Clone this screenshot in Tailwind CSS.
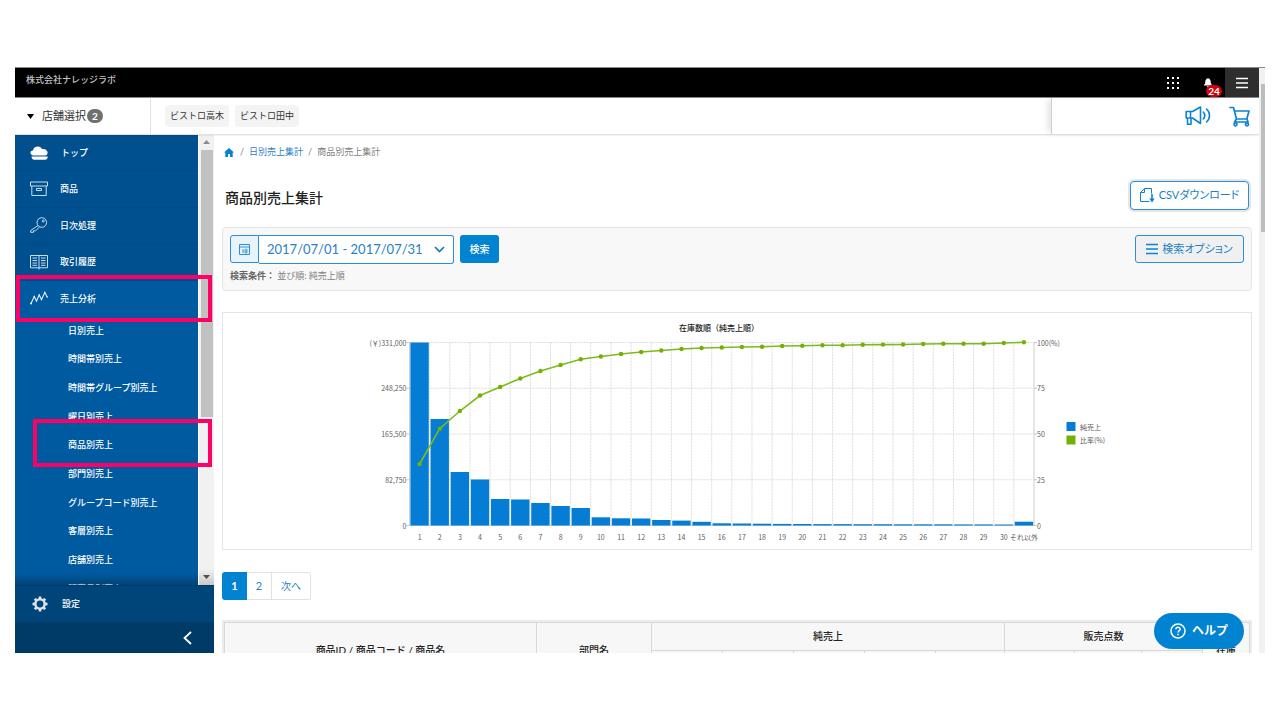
<!DOCTYPE html>
<html lang="ja">
<head>
<meta charset="utf-8">
<title>商品別売上集計</title>
<script src="https://cdn.jsdelivr.net/npm/@tailwindcss/browser@4"></script>
</head>
<body class="bg-white font-['Lato','Noto_Sans_CJK_JP',sans-serif] text-[9px] text-[#333]">
<div class="h-screen px-[15px] py-[67px]">
<div class="relative flex h-full overflow-hidden">

  <div class="flex min-w-0 flex-1 flex-col">
    <header class="flex h-[31px] shrink-0 items-center border-y border-[#8a8a8a] bg-black text-white">
      <div class="flex-1 pb-[6px] pl-[11px] font-medium text-[#c4c4c4]">株式会社ナレッジラボ</div>
      <button class="mr-[18px] size-6" aria-label="アプリ一覧">
        <svg viewBox="0 0 24 24" fill="#fff"><path d="M6 6h2v2H6zM11 6h2v2h-2zM16 6h2v2h-2zM6 11h2v2H6zM11 11h2v2h-2zM16 11h2v2h-2zM6 16h2v2H6zM11 16h2v2h-2zM16 16h2v2h-2z"/></svg>
      </button>
      <button class="relative mr-1 h-[29px] w-[18px]" aria-label="お知らせ">
        <svg class="absolute top-[10px] left-0 size-[10px]" viewBox="0 0 10 10" fill="#fff"><path d="M5 0.300C2.800.500 2.300 2.300 2.200 5L.800 7.500h8.400L7.800 5C7.700 2.300 7.200.500 5 .300zM3.800 8h2.400L5 9.600z"/></svg>
        <span class="absolute top-[17px] left-[3px] flex h-3 w-4 items-center justify-center rounded-md bg-[#d0000b] text-[10px] font-bold">24</span>
      </button>
      <button class="flex h-[29px] w-[34px] items-center justify-center bg-[#2e2e2e]" aria-label="メニュー">
        <svg class="h-3 w-3" viewBox="0 0 12 12" stroke="#fff" stroke-width="1.400"><path d="M0 1.500h12M0 6h12M0 10.500h12"/></svg>
      </button>
    </header>

    <div class="relative z-10 flex h-[37px] shrink-0 items-stretch border-b border-[#e2e2e2] bg-white shadow-[0_1px_1px_#0000000d]">
      <button class="flex w-[136px] items-center border-r border-[#e2e2e2] pl-3 text-[11px]">
        <svg class="mr-2 h-[5px] w-[7px]" viewBox="0 0 7 5"><path d="M0 0h7L3.500 5z"/></svg>
        店舗選択
        <span class="ml-px flex h-[14px] w-4 items-center justify-center rounded-full bg-[#707070] text-[10px] font-bold text-white">2</span>
      </button>
      <div class="flex flex-1 items-center gap-[6px] overflow-hidden pl-[14px]">
        <span class="flex h-[22px] items-center rounded bg-[#f4f4f4] px-[5px]">ビストロ高木</span>
        <span class="flex h-[22px] items-center rounded bg-[#f4f4f4] px-[5px]">ビストロ田中</span>
      </div>
      <div class="flex w-[208px] items-center justify-end gap-[18px] border-l border-[#d0d0d0] pr-[9px] shadow-[-5px_0_6px_-2px_#0000001f]">
        <button aria-label="お知らせ配信">
          <svg class="h-[22px] w-[26px]" viewBox="0 0 26 22" fill="none" stroke="#0a84d0" stroke-width="1.600" stroke-linejoin="round" stroke-linecap="round"><path d="M1.200 6.500h6.300L15.500 2v16.500l-8-5.500H1.200zM5.500 6.500V13M2.500 13v6.200h3.500V13.500M18.300 7c1.700 2 1.700 5 0 7M21.500 4c4 3.500 4 9.500 0 13"/></svg>
        </button>
        <button aria-label="カート">
          <svg class="h-[21px] w-[21px]" viewBox="0 0 21 21" fill="none" stroke="#0a84d0" stroke-width="1.700" stroke-linejoin="round" stroke-linecap="round"><path d="M1 1.500h3.500L7.500 13h10.300l2.200-8H5.500M7.500 13l-2 3h13.500l-1-3"/><circle cx="6.500" cy="18.300" r="1.500"/><circle cx="18" cy="18.300" r="1.500"/></svg>
        </button>
      </div>
    </div>

    <div class="flex min-h-0 flex-1">
      <aside class="flex w-[199px] shrink-0 flex-col text-white">
        <div class="flex min-h-0 flex-1">
          <nav class="relative min-w-0 flex-1 overflow-hidden bg-[#005aa0] font-medium">
            <ul class="grid h-[182px] grid-rows-5">
              <li class="border-b border-[#004a85] bg-[#00508f]"><a href="#" class="flex h-full items-center gap-3 pl-[15px]">
                <svg class="h-5 w-[19px]" viewBox="0 0 19 20" fill="#fff"><path d="M3.500 12.500C-.500 12-.500 7.500 3 7.500 3.500 3 10 2 12 6c4-.500 6 2 5.500 4.500-.300 1.200-1.200 2-2.500 2z"/><path d="M1.500 13.500h16.300c0 1.800-1 3.200-2.800 3.200H4.300c-1.800 0-2.800-1.400-2.800-3.200z"/></svg>
                トップ</a></li>
              <li class="border-b border-[#004a85] bg-[#00508f]"><a href="#" class="flex h-full items-center gap-3 pl-[15px]">
                <svg class="h-5 w-[18px]" viewBox="0 0 18 20" fill="none" stroke="#c9dcec"><path d="M.500 3h17v4H.500zM1.800 7v9.500h14.400V7M6.500 9.500h5v2h-5z"/></svg>
                商品</a></li>
              <li class="border-b border-[#004a85] bg-[#00508f]"><a href="#" class="flex h-full items-center gap-3 pl-[15px]">
                <svg class="h-5 w-[18px]" viewBox="0 0 18 20" fill="none" stroke="#c9dcec"><circle cx="11.800" cy="7.500" r="4.800"/><circle cx="13.300" cy="6" r="1"/><path d="M8 10.500l-7.300 5v1.800h2.800v-1.500h2L9.500 12"/></svg>
                日次処理</a></li>
              <li class="border-b border-[#004a85] bg-[#00508f]"><a href="#" class="flex h-full items-center gap-3 pl-[15px]">
                <svg class="h-5 w-[18px]" viewBox="0 0 18 20" fill="none" stroke="#c9dcec"><path d="M.500 3.500h17v12.300H.500zM9 3.500v14M2.500 6h4.500M2.500 8.500h4.500M2.500 11h4.500M2.500 13.300h4.500M11 6h4.500M11 8.500h4.500M11 11h4.500M11 13.300h4.500"/></svg>
                取引履歴</a></li>
              <li><a href="#" class="flex h-full items-center gap-3 pl-[15px]">
                <svg class="h-5 w-[18px]" viewBox="0 0 18 20" fill="none" stroke="#e4eef6" stroke-width="1.100"><path d="M1 14.500L4.300 7.500 6.500 12l2.700-6 2.300 4.500L14.800 3.500 17.200 8"/><g fill="#e4eef6" stroke="none"><circle cx="1" cy="14.500" r="1"/><circle cx="4.300" cy="7.500" r=".8"/><circle cx="6.500" cy="12" r=".8"/><circle cx="9.200" cy="6" r=".8"/><circle cx="11.500" cy="10.500" r=".8"/><circle cx="14.800" cy="3.500" r=".8"/><circle cx="17.200" cy="8" r=".8"/></g></svg>
                売上分析</a></li>
            </ul>
            <ul class="-mt-px grid h-[287px] grid-rows-10 items-center pl-[53px]">
              <li><a href="#">日別売上</a></li>
              <li><a href="#">時間帯別売上</a></li>
              <li><a href="#">時間帯グループ別売上</a></li>
              <li><a href="#">曜日別売上</a></li>
              <li><a href="#">商品別売上</a></li>
              <li><a href="#">部門別売上</a></li>
              <li><a href="#">グループコード別売上</a></li>
              <li><a href="#">客層別売上</a></li>
              <li><a href="#">店舗別売上</a></li>
              <li><a href="#">販売員別売上</a></li>
            </ul>
            <div class="absolute inset-x-0 bottom-0 h-3 bg-linear-to-b from-transparent to-black/25"></div>
          </nav>
          <div class="flex w-4 flex-col items-center border-l border-white bg-[#f1f1f1]">
            <svg class="my-[5px] h-[5px] w-[7px] shrink-0" viewBox="0 0 7 5" fill="#8a8a8a"><path d="M3.500 0L7 4H0z"/></svg>
            <div class="h-[267px] w-3 bg-[#c1c1c1]"></div>
            <div class="flex-1"></div>
            <div class="flex h-4 w-full items-center justify-center bg-linear-to-b from-[#f1f1f1] to-[#c9c9c9]"><svg class="h-[5px] w-[7px]" viewBox="0 0 7 5" fill="#505050"><path d="M0 0h7L3.500 4z"/></svg></div>
          </div>
        </div>
        <a href="#" class="flex h-[37px] shrink-0 items-center gap-[14px] border-t border-[#003a68] bg-[#00457a] pl-[17px] font-medium">
          <svg class="size-4" viewBox="0 0 16 16"><g fill="#dbe3ea"><circle cx="8" cy="8" r="5.800"/><path d="M6.800.500h2.400l.500 3H6.300zM6.800 15.500h2.400l.500-3H6.300zM.500 6.800v2.400l3 .500V6.300zM15.500 6.800v2.400l-3 .500V6.300zM1.900 3.600l1.700-1.700 2.400 1.700-2.400 2.400zM14.100 3.600l-1.700-1.700L10 3.600 12.400 6zM1.900 12.400l1.700 1.700L6 12.400 3.600 10zM14.100 12.400l-1.700 1.700-2.400-1.700 2.400-2.400z"/></g><circle cx="8" cy="8" r="3.400" fill="#00457a"/></svg>
          設定</a>
        <button class="flex h-[31px] shrink-0 items-center justify-end bg-[#003b67] pr-[22px]" aria-label="メニューを閉じる">
          <svg class="h-[14px] w-[9px]" viewBox="0 0 9 14" fill="none" stroke="#fff" stroke-width="1.800"><path d="M8 1L1.500 7 8 13"/></svg>
        </button>
      </aside>

      <main class="min-w-0 flex-1 overflow-hidden pr-[7px] pl-2">
        <div class="flex h-[34px] items-center gap-[5px] pl-[2px] text-[#808080]">
          <a href="#" class="mr-px" aria-label="ホーム"><svg class="h-[9px] w-[10px]" viewBox="0 0 10 9" fill="#0083d0"><path d="M5 0l5 4.500H8.700V9H6V6H4v3H1.300V4.500H0z"/></svg></a>
          <span>/</span><a href="#" class="text-[#2f80c8]">日別売上集計</a><span>/</span><span>商品別売上集計</span>
        </div>
        <div class="mt-2 flex h-[37px] items-center justify-between pr-[3px] pl-[3px]">
          <h1 class="pt-1 text-[14px] font-medium text-[#222]">商品別売上集計</h1>
          <button class="flex h-[29px] w-[119px] items-center justify-center gap-1 rounded border border-[#2a8fd4] bg-white text-[11px] text-[#1d7fc6] ring-2 ring-[#e6e6e6] [font-feature-settings:'palt']">
            <svg class="h-[15px] w-[15px]" viewBox="0 0 15 15" fill="none" stroke="#0a84d0" stroke-width="1"><path d="M9.500 13.500H.500V4.500l4-4h7v5M4.500.500v4h-4"/><path d="M12 6v6" stroke-width="1.600"/><path d="M9.300 10.500h5.400L12 14.500z" fill="#0a84d0" stroke="none"/></svg>
            CSVダウンロード</button>
        </div>
        <section class="mt-[13px] flex h-16 justify-between rounded border border-[#e6e6e6] bg-[#f8f8f8] px-[7px] pt-[7px]">
          <div>
            <div class="flex text-[#2a80c4]">
              <span class="flex h-7 w-[29px] items-center justify-center rounded-l-[3px] border border-[#2a8fd4] bg-[#e8f4fc]">
                <svg class="size-[11px]" viewBox="0 0 11 11" fill="none" stroke="#2a8fd4"><path d="M.500.500h10v10H.500zM.500 3h10M4 5.300v3.700"/><path d="M6 5.300h2V9H6zM6 7.200h2" stroke-width=".8"/></svg>
              </span>
              <button class="flex h-[29px] w-[195px] items-center justify-between rounded-r-[3px] border border-l-0 border-[#2a8fd4] bg-white px-2 text-[13px]">2017/07/01 - 2017/07/31
                <svg class="h-[7px] w-[11px]" viewBox="0 0 11 7" fill="none" stroke="#1d78b8" stroke-width="1.700"><path d="M1 1l4.500 4.500L10 1"/></svg></button>
              <button class="ml-[6px] h-7 w-[39px] rounded-[3px] bg-[#0083d0] text-[10px] font-medium text-white">検索</button>
            </div>
            <p class="mt-[5px] leading-[14px] text-[#808080]"><span class="font-bold text-[#666]">検索条件：</span> 並び順: 純売上順</p>
          </div>
          <button class="flex h-7 w-[109px] items-center justify-center gap-1 rounded-[3px] border border-[#2a8fd4] bg-[#f0f0f0] text-[11px] text-[#1d7fc6] [font-feature-settings:'palt']">
            <svg class="h-3 w-3" viewBox="0 0 12 12" stroke="#0a84d0" stroke-width="1.400"><path d="M0 1.500h12M0 6h12M0 10.500h12"/></svg>
            検索オプション</button>
        </section>

        <figure class="mt-[21px] border border-[#e4e4e4]">
          <svg id="chart" class="h-[236px] w-full font-['Noto_Sans_CJK_JP',sans-serif]" viewBox="223 313 1028 236" role="img" aria-label="在庫数順（純売上順）"></svg>
        </figure>

        <nav class="mt-[22px] flex h-7 text-[11px] text-[#2a80c4]" aria-label="ページ">
          <a href="#" class="flex w-[25px] items-center justify-center rounded-l-[3px] bg-[#0083d0] font-bold text-white">1</a>
          <a href="#" class="flex w-[25px] items-center justify-center border border-l-0 border-[#e2e2e2]">2</a>
          <a href="#" class="flex w-[39px] items-center justify-center rounded-r-[3px] border border-l-0 border-[#e2e2e2] text-[10px]">次へ</a>
        </nav>

        <div class="mt-5 border-2 border-[#ececec]">
          <table class="w-full table-fixed border-collapse text-[10px] font-medium text-[#222] [&_th]:h-7 [&_th]:border [&_th]:border-[#d8d8d8] [&_th]:bg-[#f7f7f7] [&_th]:p-0 [&_th]:font-medium">
            <colgroup><col><col class="w-[115px]"><col class="w-[71px]"><col class="w-[71px]"><col class="w-[71px]"><col class="w-[71px]"><col class="w-[69px]"><col class="w-[70px]"><col class="w-[67px]"><col class="w-[61px]"><col class="w-[47px]"></colgroup>
            <thead>
              <tr><th rowspan="2">商品ID / 商品コード / 商品名</th><th rowspan="2">部門名</th><th colspan="5">純売上</th><th colspan="3">販売点数</th><th rowspan="2">在庫</th></tr>
              <tr><th></th><th></th><th></th><th></th><th></th><th></th><th></th><th></th></tr>
            </thead>
          </table>
        </div>
      </main>
    </div>
  </div>

  <div class="flex w-[6px] shrink-0 flex-col border-t border-[#8a8a8a] bg-[#f1f1f1] pl-[2px]">
    <div class="mt-4 h-[148px] bg-[#bdbdbd]"></div>
  </div>

  <button class="absolute right-[21px] bottom-1 flex h-9 w-[90px] items-center justify-center gap-[6px] rounded-full bg-[#0083d0] text-[12px] font-bold text-white">
    <svg class="size-4" viewBox="0 0 16 16" fill="none" stroke="#fff" stroke-width="1.500"><circle cx="8" cy="8" r="7"/><path d="M5.900 6.300c0-2.700 4.300-2.700 4.300-.1C10.200 7.700 8 7.700 8 9.500M8 10.800v1.500"/></svg>
    ヘルプ</button>

  <!-- highlighted menu entries -->
  <div class="pointer-events-none absolute top-[208px] left-px z-20 h-[47px] w-[196px] border-4 border-[#ff0066]"></div>
  <div class="pointer-events-none absolute top-[352px] left-[18px] z-20 h-12 w-[179px] border-4 border-[#ff0066]"></div>
</div>
</div>

<script>
const L = 409.5, R = 1034, T = 342.5, B = 525.5, STEP = (R - L) / 31;
const bars = [183,106.5,53.5,46,26.5,26,22.5,19.5,17.5,8.2,7.2,7,5.5,4.9,3.7,2.2,2,1.8,1.6,1.5,1.4,1.4,1.3,1.3,1.2,1.2,1.2,1.1,1.1,1,3.8];
const ratio = [464,428.7,411,395.5,387,378.5,371,365,359.3,356.5,354,352,350.5,349,348,347.5,347,346.7,346,345.8,345.3,345.2,344.7,344.6,344.5,344,343.8,343.8,343.7,343,342.3];
const text = (x, y, s, anchor, fill = '#606060', size = 7, weight = 400) =>
  `<text x="${x}" y="${y}" text-anchor="${anchor}" fill="${fill}" font-size="${size}" font-weight="${weight}">${s}</text>`;
let s = '';
['(￥)331,000','248,250','165,500','82,750','0'].forEach((v, i) => {
  const y = T + (B - T) * i / 4;
  s += `<path d="M${L} ${y}H${R}" stroke="#dcdcdc" stroke-dasharray="2 1"/><path d="M${L - 3} ${y}h3M${R} ${y}h3" stroke="#c8c8c8"/>`;
  s += text(L - 3, y + 3, v, 'end') + text(R + 3, y + 3, ['100(%)','75','50','25','0'][i], 'start');
});
for (let i = 1; i < 31; i++) s += `<path d="M${L + STEP * i} ${T}V${B}" stroke="#dcdcdc" stroke-dasharray="2 1"/>`;
s += `<path d="M${L} ${T}V${B}H${R}V${T}" fill="none" stroke="#cfcfcf"/>`;
bars.forEach((h, i) => {
  const cx = L + STEP * (i + .5);
  s += `<rect x="${cx - 9.2}" y="${B - h}" width="18.400" height="${h}" fill="#057dd4"/>`;
  s += text(cx, 540, i === 30 ? 'それ以外' : i + 1, 'middle');
});
const pts = ratio.map((y, i) => [L + STEP * (i + .5), y]);
s += `<polyline points="${pts.join(' ')}" fill="none" stroke="#7dbb1c" stroke-width="1.600"/>`;
s += pts.map(p => `<circle cx="${p[0]}" cy="${p[1]}" r="2.200" fill="#74b000"/>`).join('');
s += text(719, 331, '在庫数順（純売上順）', 'middle', '#222', 8, 500);
s += `<path d="M1066.500 422h9v9h-9z" fill="#057dd4"/><path d="M1066.500 435.500h9v9h-9z" fill="#74b000"/>`;
s += text(1080, 430, '純売上', 'start') + text(1080, 443, '比率(%)', 'start');
document.getElementById('chart').innerHTML = s;
</script>
</body>
</html>
